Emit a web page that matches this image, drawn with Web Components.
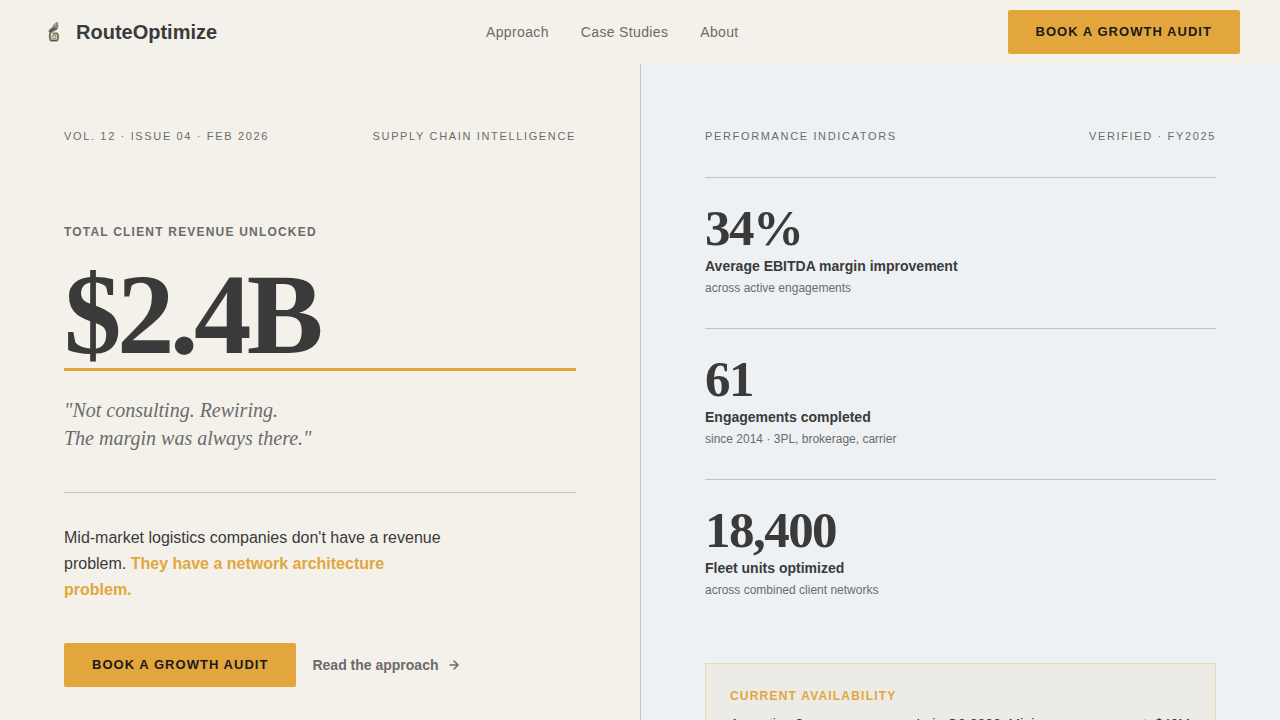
<!DOCTYPE html>
<html lang="en">
<head>
<meta charset="UTF-8">
<meta name="viewport" content="width=device-width, initial-scale=1.0">
<title>RouteOptimize</title>
<style>
    :root {
        --cream: #f4f1ea;
        --mist: #edf1f4;
        --ink: #3a3a3a;
        --muted: #6b6b6b;
        --amber: #e2a63d;
        --rule: #c0c2c3;
        --serif: "Liberation Serif", "Times New Roman", serif;
    }

    body {
        margin: 0;
        background: var(--cream);
        color: var(--ink);
        font-family: "Liberation Sans", Arial, sans-serif;
        font-size: 16px;
    }
</style>
</head>
<body>
<site-header>
    <a slot="link" href="#approach">Approach</a>
    <a slot="link" href="#cases">Case Studies</a>
    <a slot="link" href="#about">About</a>
    <cta-button slot="action">BOOK A GROWTH AUDIT</cta-button>
</site-header>
<split-layout>
    <hero-panel slot="left"></hero-panel>
    <metrics-panel slot="right">
        <metric-row value="34%" label="Average EBITDA margin improvement">across active engagements</metric-row>
        <metric-row value="61" label="Engagements completed">since 2014 · 3PL, brokerage, carrier</metric-row>
        <metric-row value="18,400" label="Fleet units optimized">across combined client networks</metric-row>
        <availability-card slot="footer" heading="CURRENT AVAILABILITY">Accepting <b>2 new engagements</b> in Q2 2026. Minimum engagement: $40M annual revenue.</availability-card>
    </metrics-panel>
</split-layout>

<script>
(function () {
    function define(name, html, setup) {
        const tmpl = document.createElement('template');
        tmpl.innerHTML = html;

        customElements.define(name, class extends HTMLElement {
            constructor() {
                super();
                this.attachShadow({ mode: 'open' });
                this.shadowRoot.appendChild(tmpl.content.cloneNode(true));
            }

            connectedCallback() {
                if (setup) setup(this, this.shadowRoot);
            }
        });
    }

    define('cta-button', `
        <style>
            :host { display: block; }
            button {
                display: block;
                height: 44px;
                padding: 0 28px;
                border: 0;
                border-radius: 2px;
                background: var(--amber);
                color: #1a1a1a;
                font: bold 13px/20px "Liberation Sans", Arial, sans-serif;
                letter-spacing: 0.08em;
                white-space: nowrap;
                cursor: pointer;
            }
        </style>
        <button type="button"><slot></slot></button>
    `);

    define('site-header', `
        <style>
            :host {
                display: flex;
                justify-content: space-between;
                align-items: center;
                height: 64px;
                padding: 0 40px;
                background: var(--cream);
            }
            .brand {
                display: flex;
                align-items: center;
                gap: 8px;
                color: var(--ink);
                font-size: 20px;
                font-weight: bold;
                text-decoration: none;
            }
            svg { display: block; width: 28px; height: 28px; }
            nav { display: flex; gap: 32px; }
            ::slotted(a) {
                color: var(--muted);
                font-size: 14px;
                letter-spacing: 0.025em;
                text-decoration: none;
            }
        </style>
        <a class="brand" href="#">
            <svg viewBox="0 0 28 28" fill="none" aria-hidden="true">
                <path d="M17.500 4.500 C14 5.500 12.500 8 13 11 H17 C18 9 18 7 17.500 4.500 Z" fill="#8f8672" stroke="#857b66"/>
                <path d="M9 14 C9 11.500 11 10 14 9.500 L17 11 C15 13 13 12.500 11.500 14.500 Z" fill="#5f5b50" stroke="#77705f"/>
                <path d="M10.500 14.500 C9.500 17 9.500 21 11 22.500 H17 C18.500 21 18.500 17 17 15.500 H12.500" stroke="#79725f" stroke-width="2"/>
                <path d="M12 17.500 H16 V20.500 H12 Z" fill="#d3c5a5" stroke="#a69a80"/>
                <path d="M11 22.500 H16.500" stroke="#4f4c44"/>
                <path d="M16 5.500 L14.500 8.500" stroke="#bdb39b"/>
            </svg>
            <span>RouteOptimize</span>
        </a>
        <nav><slot name="link"></slot></nav>
        <slot name="action"></slot>
    `);

    define('split-layout', `
        <style>
            :host {
                display: grid;
                grid-template-columns: 1fr 1fr;
                min-height: calc(100vh - 64px);
            }
            .right {
                border-left: 1px solid var(--rule);
                background: var(--mist);
            }
        </style>
        <div class="left"><slot name="left"></slot></div>
        <div class="right"><slot name="right"></slot></div>
    `);

    define('meta-line', `
        <style>
            :host {
                display: flex;
                justify-content: space-between;
                color: var(--muted);
                font-size: 11px;
                line-height: 16px;
                letter-spacing: 0.15em;
            }
        </style>
        <slot></slot>
    `);

    define('hero-panel', `
        <style>
            :host { display: block; padding: 64px; }
            h1 {
                margin: 80px 0 0;
                color: var(--muted);
                font-size: 12px;
                line-height: 16px;
                letter-spacing: 0.1em;
            }
            .figure {
                margin: 25px 0 0;
                padding-bottom: 3px;
                border-bottom: 3px solid var(--amber);
                font: bold 115px/100px var(--serif);
                letter-spacing: -0.04em;
            }
            blockquote {
                margin: 25px 0 0;
                padding-bottom: 40px;
                border-bottom: 1px solid var(--rule);
                color: var(--muted);
                font: italic 20px/28px var(--serif);
            }
            .pitch {
                max-width: 380px;
                margin: 32px 0 0;
                line-height: 26px;
            }
            strong { color: var(--amber); }
            .actions {
                display: flex;
                align-items: center;
                gap: 16px;
                margin-top: 40px;
            }
            .more {
                display: flex;
                align-items: center;
                gap: 8px;
                color: var(--muted);
                font-size: 14px;
                font-weight: bold;
                text-decoration: none;
            }
        </style>
        <meta-line>
            <span>VOL. 12 · ISSUE 04 · FEB 2026</span>
            <span>SUPPLY CHAIN INTELLIGENCE</span>
        </meta-line>
        <h1>TOTAL CLIENT REVENUE UNLOCKED</h1>
        <p class="figure">$2.4B</p>
        <blockquote>"Not consulting. Rewiring.<br>The margin was always there."</blockquote>
        <p class="pitch">Mid-market logistics companies don't have a revenue problem. <strong>They have a network architecture problem.</strong></p>
        <div class="actions">
            <cta-button>BOOK A GROWTH AUDIT</cta-button>
            <a class="more" href="#approach">
                <span>Read the approach</span>
                <svg width="14" height="14" viewBox="0 0 14 14" fill="none" stroke="currentColor" stroke-width="1.500" stroke-linecap="round" stroke-linejoin="round" aria-hidden="true">
                    <path d="M3 7 H11 M7 3 L11 7 L7 11"/>
                </svg>
            </a>
        </div>
    `);

    define('metrics-panel', `
        <style>
            :host { display: block; padding: 64px; }
            .rows { margin-top: 33px; }
            .footer { margin-top: 33px; }
        </style>
        <meta-line>
            <span>PERFORMANCE INDICATORS</span>
            <span>VERIFIED · FY2025</span>
        </meta-line>
        <div class="rows"><slot></slot></div>
        <div class="footer"><slot name="footer"></slot></div>
    `);

    define('metric-row', `
        <style>
            :host {
                display: block;
                padding: 25px 0 32px;
                border-top: 1px solid var(--rule);
            }
            .value {
                font: bold 51px/51px var(--serif);
                letter-spacing: -0.03em;
            }
            .label {
                margin-top: 3px;
                font-size: 14px;
                font-weight: bold;
                line-height: 18px;
            }
            .note {
                margin-top: 5px;
                color: var(--muted);
                font-size: 12px;
                line-height: 16px;
            }
        </style>
        <div class="value"></div>
        <div class="label"></div>
        <div class="note"><slot></slot></div>
    `, function (host, root) {
        root.querySelector('.value').textContent = host.getAttribute('value');
        root.querySelector('.label').textContent = host.getAttribute('label');
    });

    define('availability-card', `
        <style>
            :host {
                display: block;
                padding: 24px;
                border: 1px solid #e4dab4;
                background: #ecebe5;
            }
            h2 {
                margin: 0;
                color: var(--amber);
                font-size: 12px;
                line-height: 16px;
                letter-spacing: 0.1em;
            }
            p {
                margin: 8px 0 0;
                font-size: 14px;
                line-height: 24px;
            }
        </style>
        <h2></h2>
        <p><slot></slot></p>
    `, function (host, root) {
        root.querySelector('h2').textContent = host.getAttribute('heading');
    });
})();
</script>
</body>
</html>
